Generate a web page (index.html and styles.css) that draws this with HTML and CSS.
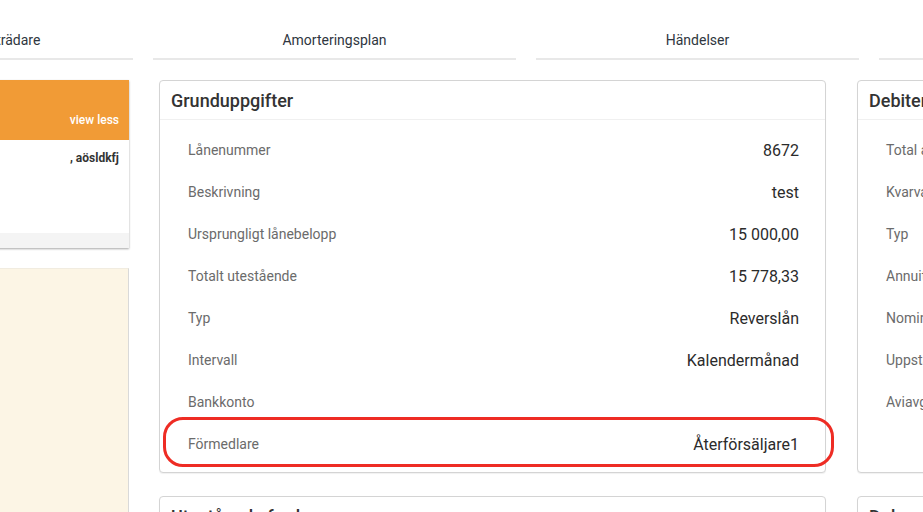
FILE: index.html
```html
<!DOCTYPE html>
<html lang="sv">
<head>
<meta charset="utf-8">
<title>Lån</title>
<link rel="stylesheet" href="styles.css">
</head>
<body>
<div class="page">
  <nav class="tabs">
    <div class="tab tab-1">Företrädare</div>
    <div class="tab tab-2">Amorteringsplan</div>
    <div class="tab tab-3">Händelser</div>
    <div class="tab tab-4">Dokument</div>
  </nav>
  <div class="content">
    <aside class="left">
      <div class="ocard">
        <div class="ocard-head"><span class="view-less">view less</span></div>
        <div class="ocard-body"><b>, aösldkfj</b></div>
        <div class="ocard-foot"></div>
      </div>
      <div class="cream"></div>
    </aside>
    <section class="col main">
      <div class="card card-main">
        <h2 class="card-title">Grunduppgifter</h2>
        <div class="card-body">
          <div class="row"><span class="label">Lånenummer</span><span class="value">8672</span></div>
          <div class="row"><span class="label">Beskrivning</span><span class="value">test</span></div>
          <div class="row"><span class="label">Ursprungligt lånebelopp</span><span class="value">15 000,00</span></div>
          <div class="row"><span class="label">Totalt utestående</span><span class="value">15 778,33</span></div>
          <div class="row"><span class="label">Typ</span><span class="value">Reverslån</span></div>
          <div class="row"><span class="label">Intervall</span><span class="value">Kalendermånad</span></div>
          <div class="row"><span class="label">Bankkonto</span><span class="value"></span></div>
          <div class="row row-hl"><span class="label">Förmedlare</span><span class="value">Återförsäljare1</span><span class="highlight"></span></div>
        </div>
      </div>
      <div class="card card-next">
        <h2 class="card-title">Utestående fordran</h2>
      </div>
    </section>
    <section class="col side">
      <div class="card card-main">
        <h2 class="card-title">Debiteringsuppgifter</h2>
        <div class="card-body">
          <div class="row"><span class="label">Total amortering</span></div>
          <div class="row"><span class="label">Kvarvarande</span></div>
          <div class="row"><span class="label">Typ</span></div>
          <div class="row"><span class="label">Annuitet</span></div>
          <div class="row"><span class="label">Nominell ränta</span></div>
          <div class="row"><span class="label">Uppstartsavgift</span></div>
          <div class="row"><span class="label">Aviavgift</span></div>
        </div>
      </div>
      <div class="card card-next">
        <h2 class="card-title">Dokument</h2>
      </div>
    </section>
  </div>
</div>
</body>
</html>
```

FILE: styles.css
```css
html, body {
  margin: 0;
  padding: 0;
  background: #fff;
  overflow: hidden;
  height: 512px;
}
body {
  font-family: Roboto, "Noto Sans", sans-serif;
  color: #333;
  width: 923px;
}
.page {
  margin-left: -140px;
  width: 1400px;
}
.tabs {
  display: flex;
  gap: 20px;
}
.tab {
  box-sizing: border-box;
  padding: 31px 0 8px;
  line-height: 19px;
  font-size: 14px;
  color: #2f3640;
  text-align: center;
  border-bottom: 2px solid #e8e8e8;
}
.tab-1 { width: 273px; padding-left: 16px; }
.tab-2 { width: 363px; }
.tab-3 { width: 323px; }
.tab-4 { width: 300px; }

.content {
  display: flex;
  margin-top: 20px;
  align-items: flex-start;
}
.left {
  width: 269px;
  flex: none;
  margin-right: 30px;
}
.ocard {
  background: #fff;
  box-shadow: 0 1px 2px rgba(0,0,0,0.35);
}
.ocard-head {
  background: #f19b36;
  height: 60px;
  display: flex;
  justify-content: flex-end;
  align-items: flex-end;
  padding-right: 10px;
}
.view-less {
  color: #fff;
  font-size: 12px;
  font-weight: 500;
  line-height: 14px;
  margin-bottom: 13px;
}
.ocard-body {
  height: 93px;
  box-sizing: border-box;
  padding: 10px 10px 0 0;
  text-align: right;
  font-size: 12px;
  line-height: 16px;
  color: #333;
}
.ocard-body b { font-weight: 700; }
.ocard-foot {
  height: 15px;
  background: #f4f4f4;
}
.cream {
  margin-top: 20px;
  height: 260px;
  background: #fcf5e5;
  border-top: 1px solid #f1ece0;
  border-right: 1px solid #d9d9d9;
}

.col { flex: none; }
.main { width: 667px; margin-right: 31px; }
.side { width: 300px; }

.card {
  border: 1px solid #d4d4d4;
  border-radius: 4px;
  background: #fff;
  box-shadow: 0 1px 1px rgba(0,0,0,0.06);
}
.card-main { height: 393px; box-sizing: border-box; }
.card-next { margin-top: 23px; height: 60px; }
.card-title {
  margin: 0;
  height: 39px;
  box-sizing: border-box;
  padding: 9px 11px 0;
  font-size: 18px;
  line-height: 22px;
  font-weight: 500;
  color: #333;
  border-bottom: 1px solid #f0f0f0;
  white-space: nowrap;
  overflow: hidden;
}
.card-body {
  padding: 9px 0 7px;
}
.row {
  position: relative;
  display: flex;
  justify-content: space-between;
  align-items: center;
  height: 42px;
  padding: 0 26px 0 28px;
}
.label {
  font-size: 14px;
  color: #6b6b6b;
  white-space: nowrap;
}
.value {
  font-size: 16px;
  color: #2b2b2b;
}
.highlight {
  position: absolute;
  left: 3px;
  right: -9px;
  top: -6px;
  bottom: -2px;
  border: 3px solid #ee2c24;
  border-radius: 20px;
  pointer-events: none;
}
```
